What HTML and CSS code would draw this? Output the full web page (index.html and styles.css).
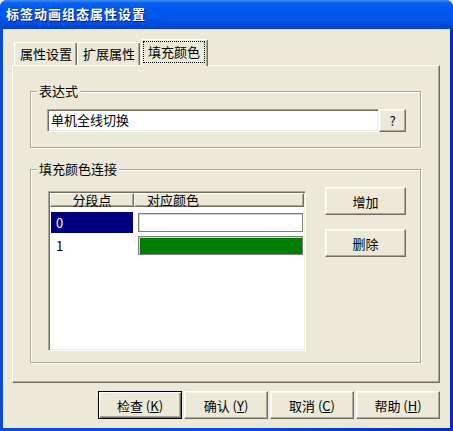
FILE: index.html
```html
<!DOCTYPE html>
<html lang="zh-CN">
<head>
    <meta charset="UTF-8">
    <title>标签动画组态属性设置</title>
    <link rel="stylesheet" href="styles.css">
</head>
<body>
    <div class="window">
        <div class="titlebar">标签动画组态属性设置</div>
        <div class="client">
            <!-- 选项卡 -->
            <div class="tabs">
                <div class="tab">属性设置</div>
                <div class="tab">扩展属性</div>
                <div class="tab active"><span class="focus">填充颜色</span></div>
            </div>

            <div class="panel">
                <!-- 表达式 -->
                <div class="group group-expr">
                    <span class="group-title">表达式</span>
                    <div class="edit">单机全线切换</div>
                    <button class="btn btn-help">?</button>
                </div>

                <!-- 填充颜色连接 -->
                <div class="group group-fill">
                    <span class="group-title">填充颜色连接</span>
                    <div class="list">
                        <div class="list-head">
                            <div class="col col-seg">分段点</div>
                            <div class="col col-color">对应颜色</div>
                        </div>
                        <div class="row">
                            <div class="cell-seg"><span class="sel">0</span></div>
                            <div class="cell-color"><div class="swatch" style="background:#ffffff"></div></div>
                        </div>
                        <div class="row">
                            <div class="cell-seg"><span>1</span></div>
                            <div class="cell-color"><div class="swatch" style="background:#008000"></div></div>
                        </div>
                    </div>
                    <div class="side-buttons">
                        <button class="btn">增加</button>
                        <button class="btn">删除</button>
                    </div>
                </div>
            </div>

            <div class="footer">
                <button class="btn btn-default">检查 (<u>K</u>)</button>
                <button class="btn">确认 (<u>Y</u>)</button>
                <button class="btn">取消 (<u>C</u>)</button>
                <button class="btn">帮助 (<u>H</u>)</button>
            </div>
        </div>
    </div>
</body>
</html>
```

FILE: styles.css
```css
body {
    margin: 0;
    padding: 0;
    font-family: "Noto Sans CJK SC", "Liberation Sans", sans-serif;
    font-size: 13px;
    color: #000;
    background: #ECE9D8;
}
.window {
    width: 453px;
    height: 431px;
    display: flex;
    flex-direction: column;
    background: linear-gradient(to right, #0A4BD6, #0550E6 50%, #0030B0);
    border-radius: 7px 7px 0 0;
    overflow: hidden;
}
.titlebar {
    height: 29px;
    flex: none;
    padding-left: 6px;
    line-height: 28px;
    font-size: 13px;
    font-weight: bold;
    letter-spacing: 1px;
    color: #fff;
    text-shadow: 1px 1px 0 #0A1883;
    background: linear-gradient(#3D8DF5 0, #0D63EC 3px, #0058EE 7px, #0055EA 18px, #004EDE 24px, #0042CC 28px);
}
.client {
    flex: 1;
    margin: 0 3px 3px 3px;
    padding: 0 10px 0 9px;
    background: #ECE9D8;
}
.tabs {
    height: 36px;
    display: flex;
    align-items: flex-end;
    padding-left: 2px;
}
.tab {
    height: 23px;
    box-sizing: border-box;
    padding: 0 4px 0 5px;
    line-height: 21px;
    border-top: 1px solid #fff;
    border-left: 1px solid #fff;
    border-right: 1px solid #716F64;
    border-radius: 2px 2px 0 0;
    box-shadow: inset -1px 0 0 #ACA899;
    background: #ECE9D8;
    white-space: nowrap;
}
.tab.active {
    position: relative;
    z-index: 1;
    height: 27px;
    margin-bottom: -1px;
    margin-left: 1px;
    padding: 1px 2px 0 1px;
}
.focus {
    display: inline-block;
    height: 20px;
    line-height: 19px;
    padding: 0 4px 0 4px;
    border: 1px dotted #000;
}
.panel {
    height: 318px;
    box-sizing: border-box;
    padding-top: 25px;
    border-top: 1px solid #fff;
    border-left: 1px solid #fff;
    border-right: 1px solid #716F64;
    border-bottom: 1px solid #716F64;
    box-shadow: inset -1px -1px 0 #ACA899;
}
.group {
    position: relative;
    margin: 0 18px 0 17px;
    border: 1px solid #ACA899;
    box-shadow: 1px 1px 0 #fff, inset 1px 1px 0 #fff;
    display: flex;
}
.group-title {
    position: absolute;
    top: -9px;
    left: 6px;
    padding: 0 2px;
    line-height: 16px;
    background: #ECE9D8;
}
.group-expr {
    height: 57px;
    box-sizing: border-box;
    padding: 17px 14px 0 16px;
}
.edit {
    flex: 1;
    height: 23px;
    box-sizing: border-box;
    padding-left: 3px;
    line-height: 20px;
    background: #fff;
    border: 1px solid;
    border-color: #ACA899 #fff #fff #ACA899;
    box-shadow: inset 1px 1px 0 #716F64, inset -1px -1px 0 #F1EFE2;
}
.btn {
    font-family: inherit;
    font-size: 13px;
    color: #000;
    background: #ECE9D8;
    padding: 0;
    border: 1px solid;
    border-color: #fff #716F64 #716F64 #fff;
    box-shadow: inset -1px -1px 0 #ACA899, inset 1px 1px 0 #F7F6EF;
    box-sizing: border-box;
    cursor: pointer;
}
.btn-help {
    width: 27px;
    height: 23px;
    font-weight: normal;
}
.group-fill {
    margin-top: 21px;
    height: 194px;
    box-sizing: border-box;
    padding: 17px 14px 11px 17px;
    gap: 19px;
}
.list {
    width: 258px;
    margin-top: 4px;
    box-sizing: border-box;
    background: #fff;
    border: 1px solid;
    border-color: #ACA899 #fff #fff #ACA899;
    box-shadow: inset 1px 1px 0 #716F64, inset -1px -1px 0 #F1EFE2;
    padding: 1px;
}
.list-head {
    display: flex;
    height: 14px;
}
.col {
    box-sizing: border-box;
    height: 14px;
    line-height: 12px;
    background: #ECE9D8;
    border: 1px solid;
    border-color: #fff #716F64 #716F64 #fff;
    box-shadow: inset -1px -1px 0 #ACA899;
    white-space: nowrap;
}
.col-seg {
    width: 84px;
    text-align: center;
}
.col-color {
    flex: 1;
    padding-left: 12px;
}
.list-head + .row {
    margin-top: 4px;
}
.row {
    display: flex;
    height: 23px;
}
.cell-seg {
    width: 84px;
    padding: 1px 1px 0 1px;
    box-sizing: border-box;
}
.cell-seg span {
    display: block;
    height: 21px;
    line-height: 21px;
    padding-left: 5px;
}
.cell-seg .sel {
    background: #000080;
    color: #fff;
}
.cell-color {
    flex: 1;
    padding: 2px 1px 0 4px;
}
.swatch {
    height: 19px;
    box-sizing: border-box;
    border: 1px solid #808080;
    box-shadow: inset 1px 1px 0 #D4D0C8;
}
.side-buttons {
    display: flex;
    flex-direction: column;
    gap: 14px;
}
.side-buttons .btn {
    width: 81px;
    height: 28px;
}
.footer {
    display: flex;
    justify-content: flex-end;
    gap: 2px;
    margin-top: 8px;
}
.footer .btn {
    width: 84px;
    height: 28px;
}
.btn-default {
    border-color: #000;
    box-shadow: inset 1px 1px 0 #fff, inset -1px -1px 0 #716F64, inset -2px -2px 0 #ACA899;
}
```
